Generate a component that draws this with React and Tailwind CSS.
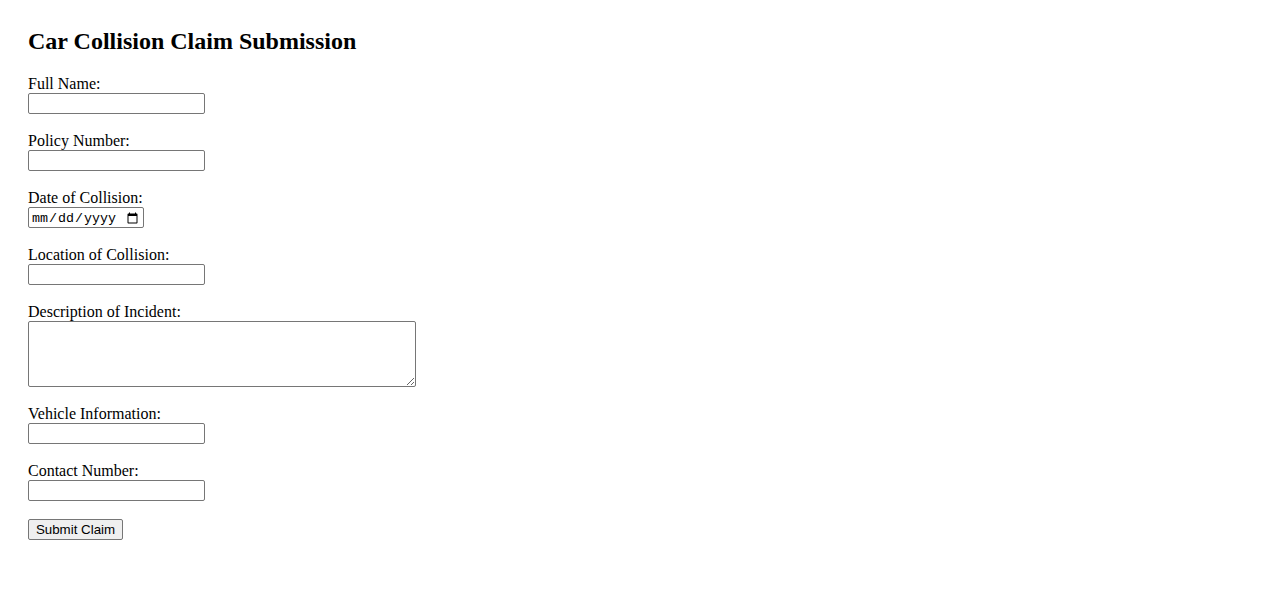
export default function App() {
    const fields = [
        { label: "Full Name:", type: "text" },
        { label: "Policy Number:", type: "text" },
        { label: "Date of Collision:", type: "date" },
        { label: "Location of Collision:", type: "text" },
        { label: "Description of Incident:", type: "textarea" },
        { label: "Vehicle Information:", type: "text" },
        { label: "Contact Number:", type: "tel" },
    ];

    const box = "border border-[#767676] rounded-[2px] bg-white text-[13.33px] outline-none";

    return (
        <div className="min-h-screen bg-white text-black font-['Liberation_Serif',serif] px-[28px] pt-[27px]">
            <h2 className="text-[24px] font-bold leading-[28px] mb-[20px]">
                Car Collision Claim Submission
            </h2>

            <form className="flex flex-col items-start" onSubmit={(e) => e.preventDefault()}>
                {fields.map((f) => (
                    <div key={f.label} className="flex flex-col items-start mb-[18px]">
                        <label className="text-[16px] leading-[18px]">{f.label}</label>
                        {f.type === "textarea" ? (
                            <textarea className={`${box} w-[388px] h-[66px] px-[2px] py-[2px] font-['Liberation_Mono',monospace]`} />
                        ) : f.type === "date" ? (
                            <input
                                type="date"
                                className={`${box} w-[116px] h-[21px] px-[2px] pt-[2px] font-['Liberation_Mono',monospace] text-[13.33px]`}
                            />
                        ) : (
                            <input
                                type={f.type}
                                className={`${box} w-[177px] h-[21px] px-[2px]`}
                            />
                        )}
                    </div>
                ))}

                <button
                    type="submit"
                    className="h-[21px] w-[95px] border border-[#767676] rounded-[2px] bg-[#efefef] font-['Liberation_Sans',Arial,sans-serif] text-[13.33px] leading-none text-black"
                >
                    Submit Claim
                </button>
            </form>
        </div>
    );
}
